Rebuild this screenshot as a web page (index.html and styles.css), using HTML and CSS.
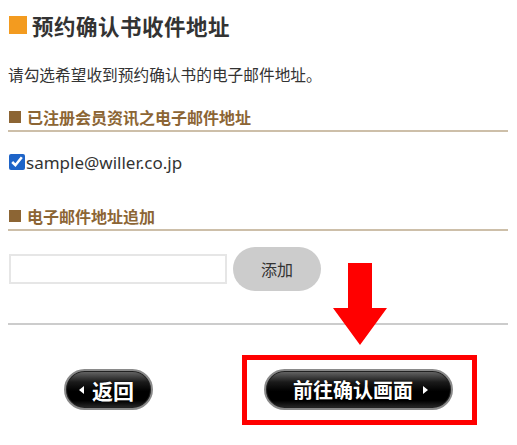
FILE: index.html
```html
<!DOCTYPE html>
<html lang="zh-CN">
<head>
<meta charset="utf-8">
<link rel="stylesheet" href="styles.css">
</head>
<body>
<div class="page">
  <h1 class="title"><span class="title-mark"></span>预约确认书收件地址</h1>
  <p class="lead">请勾选希望收到预约确认书的电子邮件地址。</p>

  <h2 class="sub">已注册会员资讯之电子邮件地址</h2>
  <label class="check-row"><input type="checkbox" class="check" checked><span class="email">sample@willer.co.jp</span></label>

  <h2 class="sub sub-2">电子邮件地址追加</h2>
  <div class="add-row">
    <input type="text" class="mail-input">
    <button class="add-btn">添加</button>
  </div>

  <div class="divider"></div>

  <div class="actions">
    <a class="pill back"><span class="tri tri-left"></span>返回</a>
    <div class="highlight">
      <a class="pill next">前往确认画面<span class="tri tri-right"></span></a>
    </div>
  </div>

  <svg class="arrow" width="54" height="83" viewBox="0 0 54 83">
    <polygon points="15,0 39,0 39,45 54,45 27,82 0,45 15,45" fill="#f00"/>
  </svg>
</div>
</body>
</html>
```
FILE: styles.css
```css
* { box-sizing: border-box; }
html, body { margin: 0; padding: 0; background: #fff; }
body {
  font-family: "Noto Sans CJK SC", "Noto Sans", sans-serif;
  color: #333;
}
.page {
  position: relative;
  width: 517px;
  height: 445px;
  padding: 10px 9px 0 8px;
}
.title {
  display: flex;
  align-items: center;
  margin: 0;
  height: 30px;
  font-size: 21.5px;
  font-weight: 700;
  color: #333;
  letter-spacing: 0.5px;
}
.title-mark {
  width: 18px;
  height: 18px;
  margin: 0 5px 0 1px;
  background: #f39b1f;
}
.lead {
  margin: 23px 0 0;
  height: 24px;
  line-height: 24px;
  font-size: 15.7px;
  color: #333;
}
.sub {
  display: flex;
  align-items: center;
  margin: 19px 0 0;
  height: 26px;
  padding-bottom: 2px;
  border-bottom: 2px solid #cdbfa9;
  font-size: 16px;
  font-weight: 700;
  color: #8c6534;
}
.sub::before {
  content: "";
  width: 12px;
  height: 12px;
  margin: 0 6px 0 1px;
  background: #8c6534;
}
.sub-2 { margin-top: 31px; }
.check-row {
  display: flex;
  align-items: center;
  margin-top: 18px;
  height: 24px;
}
.check {
  width: 16px;
  height: 16px;
  margin: 0 1px 0 1px;
  accent-color: #1e64c8;
}
.email {
  font-family: "Noto Sans", sans-serif;
  font-size: 17px;
  color: #333;
}
.add-row {
  display: flex;
  align-items: center;
  gap: 6px;
  margin-top: 16px;
  height: 44px;
}
.mail-input {
  width: 218px;
  height: 30px;
  margin-left: 1px;
  border: 2px solid #e6e6e6;
  background: #fff;
}
.add-btn {
  width: 88px;
  height: 44px;
  border: none;
  border-radius: 22px;
  background: #cccccc;
  font-family: "Noto Sans CJK SC", sans-serif;
  font-size: 16px;
  color: #333;
}
.divider {
  margin-top: 32px;
  height: 2px;
  background: #cccccc;
}
.actions {
  display: flex;
  align-items: flex-start;
  margin-top: 30px;
}
.pill {
  display: flex;
  align-items: center;
  justify-content: center;
  height: 41px;
  border-radius: 21px;
  border: 2px solid #8a8a8a;
  background: linear-gradient(#6a6a6a 0%, #1a1a1a 30%, #000 55%, #000 80%, #2a2a2a 100%);
  box-shadow: inset 0 0 0 1px #222;
  color: #fff;
  font-weight: 700;
  font-size: 20px;
  text-decoration: none;
  text-shadow: 0 0 1px #000;
}
.back {
  width: 89px;
  margin: 14px 0 0 56px;
  padding-right: 4px;
  font-size: 21px;
}
.next {
  width: 189px;
  padding-left: 4px;
}
.tri {
  width: 0;
  height: 0;
  border-top: 4px solid transparent;
  border-bottom: 4px solid transparent;
}
.tri-left {
  border-right: 5px solid #fff;
  margin-right: 8px;
}
.tri-right {
  border-left: 5px solid #fff;
  margin-left: 10px;
}
.highlight {
  margin-left: 89px;
  width: 235px;
  height: 70px;
  border: 5px solid #f00;
  padding: 9px 0 0 17px;
}
.arrow {
  position: absolute;
  left: 333px;
  top: 263px;
}
```
